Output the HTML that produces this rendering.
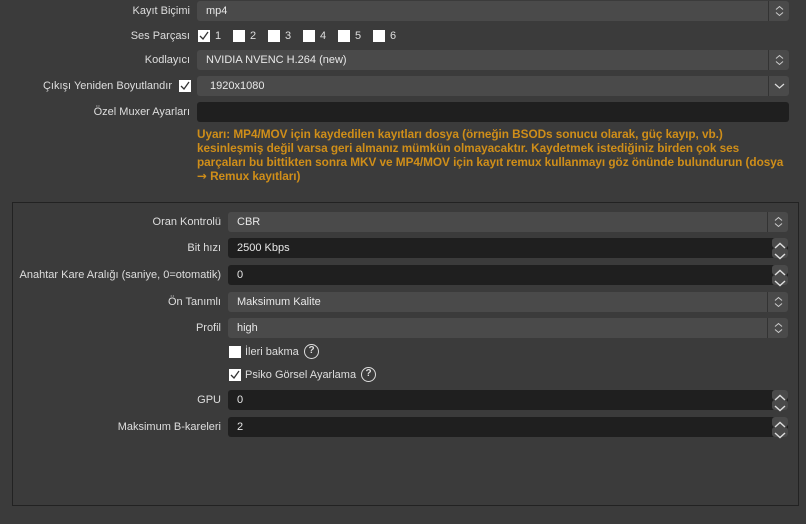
<!DOCTYPE html>
<html><head><meta charset="utf-8"><style>
*{box-sizing:border-box;margin:0;padding:0}
body{width:806px;height:524px;background:#3b3b3b;font-family:"Liberation Sans",sans-serif;font-size:11px;color:#dedede;position:relative;overflow:hidden}
.a{position:absolute;line-height:14px}
.lbl{position:absolute;text-align:right;white-space:nowrap;height:20px;line-height:20px}
.cb{position:absolute;background:#4a4a4a;border-radius:3px;height:20px;line-height:20px;padding-left:9px;color:#e8e8e8;white-space:nowrap}
.cb .ar{position:absolute;right:0;top:0;width:21px;height:20px;border-left:1px solid #333}
.in{position:absolute;background:#1f1f1f;border-radius:3px;height:20px;line-height:20px;padding-left:9px;color:#e8e8e8}
.sp{position:absolute;right:0;top:0;width:16px;height:20px}
.sp div{height:10px;background:#4a4a4a;border-radius:3px}
.chk{position:absolute;width:12px;height:12px;background:#fff}
.warn{position:absolute;left:197px;top:127px;color:#cf8e19;font-weight:bold;font-size:11.8px;letter-spacing:-0.05px;line-height:14px;white-space:nowrap}
.grp{position:absolute;left:12px;top:202px;width:787px;height:304px;border:1px solid #222}
.q{position:absolute;width:15px;height:15px;border:1.5px solid #ddd;border-radius:50%;font-size:10px;font-weight:bold;text-align:center;line-height:12px;color:#ddd}
</style></head><body>
<svg width="0" height="0" style="position:absolute"><defs>
<symbol id="ud" viewBox="0 0 21 20"><path d="M7 8.5l3.5-3 3.5 3M7 11.5l3.5 3 3.5-3" fill="none" stroke="#ccc" stroke-width="1"/></symbol>
<symbol id="up" viewBox="0 0 16 10"><path d="M3 7l5-4.5 5 4.5" fill="none" stroke="#ddd" stroke-width="1.4"/></symbol>
<symbol id="dn" viewBox="0 0 16 10"><path d="M3 3l5 4.5 5-4.5" fill="none" stroke="#ddd" stroke-width="1.4"/></symbol>
<symbol id="ck" viewBox="0 0 12 12"><path d="M2 6l3 3 5-7" fill="none" stroke="#333" stroke-width="1.3"/></symbol>
</defs></svg>

<div class="lbl" style="right:616px;top:1px">Kayıt Biçimi</div>
<div class="cb" style="left:197px;top:1px;width:592px">mp4<div class="ar"><svg width="21" height="20"><use href="#ud"/></svg></div></div>

<div class="lbl" style="right:616px;top:26px">Ses Parçası</div>
<div class="chk" style="left:198px;top:30px"><svg width="12" height="12"><use href="#ck"/></svg></div><div class="a" style="left:215px;top:29px">1</div>
<div class="chk" style="left:233px;top:30px"></div><div class="a" style="left:250px;top:29px">2</div>
<div class="chk" style="left:268px;top:30px"></div><div class="a" style="left:285px;top:29px">3</div>
<div class="chk" style="left:303px;top:30px"></div><div class="a" style="left:320px;top:29px">4</div>
<div class="chk" style="left:338px;top:30px"></div><div class="a" style="left:355px;top:29px">5</div>
<div class="chk" style="left:373px;top:30px"></div><div class="a" style="left:390px;top:29px">6</div>

<div class="lbl" style="right:616px;top:50px">Kodlayıcı</div>
<div class="cb" style="left:197px;top:50px;width:592px">NVIDIA NVENC H.264 (new)<div class="ar"><svg width="21" height="20"><use href="#ud"/></svg></div></div>

<div class="lbl" style="right:634px;top:76px">Çıkışı Yeniden Boyutlandır</div>
<div class="chk" style="left:179px;top:80px"><svg width="12" height="12"><use href="#ck"/></svg></div>
<div class="cb" style="left:197px;top:76px;width:592px;padding-left:13px">1920x1080<div class="ar"><svg width="21" height="20"><path d="M6 8l4.5 4 4.5-4" fill="none" stroke="#ddd" stroke-width="1.2"/></svg></div></div>

<div class="lbl" style="right:616px;top:102px">Özel Muxer Ayarları</div>
<div class="in" style="left:197px;top:102px;width:592px"></div>

<div class="warn">Uyarı: MP4/MOV için kaydedilen kayıtları dosya (örneğin BSODs sonucu olarak, güç kayıp, vb.)<br>kesinleşmiş değil varsa geri almanız mümkün olmayacaktır. Kaydetmek istediğiniz birden çok ses<br>parçaları bu bittikten sonra MKV ve MP4/MOV için kayıt remux kullanmayı göz önünde bulundurun (dosya<br><span style="font-family:'DejaVu Sans',sans-serif">→</span> Remux kayıtları)</div>

<div class="grp"></div>

<div class="lbl" style="right:585px;top:212px">Oran Kontrolü</div>
<div class="cb" style="left:228px;top:212px;width:560px">CBR<div class="ar"><svg width="21" height="20"><use href="#ud"/></svg></div></div>

<div class="lbl" style="right:585px;top:238px">Bit hızı</div>
<div class="in" style="left:228px;top:238px;width:560px">2500 Kbps<div class="sp"><div><svg width="16" height="10"><use href="#up"/></svg></div><div><svg width="16" height="10"><use href="#dn"/></svg></div></div></div>

<div class="lbl" style="right:585px;top:265px">Anahtar Kare Aralığı (saniye, 0=otomatik)</div>
<div class="in" style="left:228px;top:265px;width:560px">0<div class="sp"><div><svg width="16" height="10"><use href="#up"/></svg></div><div><svg width="16" height="10"><use href="#dn"/></svg></div></div></div>

<div class="lbl" style="right:585px;top:292px">Ön Tanımlı</div>
<div class="cb" style="left:228px;top:292px;width:560px">Maksimum Kalite<div class="ar"><svg width="21" height="20"><use href="#ud"/></svg></div></div>

<div class="lbl" style="right:585px;top:318px">Profil</div>
<div class="cb" style="left:228px;top:318px;width:560px">high<div class="ar"><svg width="21" height="20"><use href="#ud"/></svg></div></div>

<div class="chk" style="left:229px;top:346px"></div><div class="a" style="left:245px;top:345px">İleri bakma</div>
<div class="q" style="left:304px;top:344px">?</div>
<div class="chk" style="left:229px;top:369px"><svg width="12" height="12"><use href="#ck"/></svg></div><div class="a" style="left:245px;top:368px">Psiko Görsel Ayarlama</div>
<div class="q" style="left:361px;top:367px">?</div>

<div class="lbl" style="right:585px;top:390px">GPU</div>
<div class="in" style="left:228px;top:390px;width:560px">0<div class="sp"><div><svg width="16" height="10"><use href="#up"/></svg></div><div><svg width="16" height="10"><use href="#dn"/></svg></div></div></div>

<div class="lbl" style="right:585px;top:417px">Maksimum B-kareleri</div>
<div class="in" style="left:228px;top:417px;width:560px">2<div class="sp"><div><svg width="16" height="10"><use href="#up"/></svg></div><div><svg width="16" height="10"><use href="#dn"/></svg></div></div></div>
</body></html>
